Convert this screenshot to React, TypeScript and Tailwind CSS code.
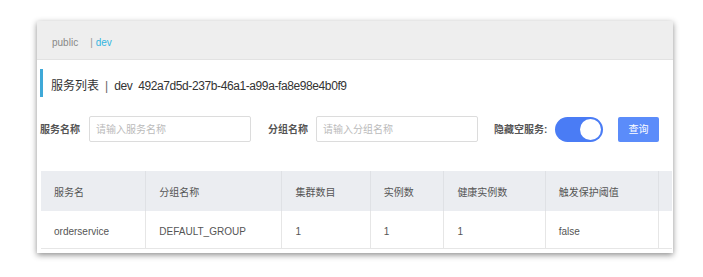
import React, { useState } from "react";

const columns = [
  { title: "服务名", w: "w-[106px]" },
  { title: "分组名称", w: "w-[137px]" },
  { title: "集群数目", w: "w-[89px]" },
  { title: "实例数", w: "w-[74px]" },
  { title: "健康实例数", w: "w-[102px]" },
  { title: "触发保护阈值", w: "w-[114px]" },
  { title: "", w: "flex-1" },
];

const row = ["orderservice", "DEFAULT_GROUP", "1", "1", "1", "false", ""];

const font = "font-['Liberation_Sans','Noto_Sans_CJK_SC',sans-serif]";

const App: React.FC = () => {
  const [hideEmpty, setHideEmpty] = useState(true);

  return (
    <div className={`w-[703px] h-[277px] bg-white pt-[21px] pl-[37px] ${font}`}>
      <div className="w-[636px] h-[232px] bg-white shadow-[0_2px_6px_rgba(0,0,0,0.45)] flex flex-col">
        <div className="h-[39px] bg-[#eeeeee] border-b border-[#e2e2e2] flex items-center pl-[15px] pt-[4px] text-[10px]">
          <span className="text-[#888]">public</span>
          <span className="ml-[12px] text-[#999]">|</span>
          <span className="ml-[3px] text-[#33b5e0]">dev</span>
        </div>

        <div className="mt-[9px] ml-[3px] h-[28px] border-l-[3px] border-[#3fa9d8] flex items-center pl-[8px] pt-[6px] text-[12px] text-[#333]">
          服务列表 <span className="mx-[6px] text-[#666]">|</span>
          <span className="tracking-[-0.4px]">dev&nbsp;&nbsp;492a7d5d-237b-46a1-a99a-fa8e98e4b0f9</span>
        </div>

        <div className="mt-[19px] flex items-center h-[26px] pl-[3px] text-[10px]">
          <span className="font-bold text-[#555] w-[49px]">服务名称</span>
          <div className="w-[162px] h-[26px] border border-[#dcdcdc] rounded-[2px] flex items-center pl-[6px] text-[#bbb]">
            请输入服务名称
          </div>
          <span className="ml-[17px] font-bold text-[#555] w-[48px]">分组名称</span>
          <div className="w-[162px] h-[26px] border border-[#dcdcdc] rounded-[2px] flex items-center pl-[6px] text-[#bbb]">
            请输入分组名称
          </div>
          <span className="ml-[16px] font-bold text-[#555] w-[61px]">隐藏空服务:</span>
          <button
            onClick={() => setHideEmpty(!hideEmpty)}
            className={`w-[48px] h-[25px] rounded-full flex items-center px-[2px] ${
              hideEmpty ? "bg-[#4a7cf5] justify-end" : "bg-[#ccc] justify-start"
            }`}
          >
            <span className="w-[21px] h-[21px] rounded-full bg-white" />
          </button>
          <button className="ml-[15px] w-[41px] h-[25px] rounded-[2px] bg-[#5b8cfa] text-white text-[10px]">
            查询
          </button>
        </div>

        <div className="mt-[29px] ml-[4px] mr-[1px] text-[10px] text-[#555]">
          <div className="flex h-[40px] bg-[#ebedf1]">
            {columns.map((c, i) => (
              <div
                key={i}
                className={`${c.w} flex items-center pl-[13px] pt-[3px] border-r border-[#dfe1e5] last:border-r-0`}
              >
                {c.title}
              </div>
            ))}
          </div>
          <div className="flex h-[38px] bg-white border-b border-[#e6e6e6]">
            {row.map((v, i) => (
              <div
                key={i}
                className={`${columns[i].w} flex items-center pl-[13px] pt-[3px] border-r border-[#e6e6e6] last:border-r-0`}
              >
                {v}
              </div>
            ))}
          </div>
        </div>
      </div>
    </div>
  );
};

export default App;
